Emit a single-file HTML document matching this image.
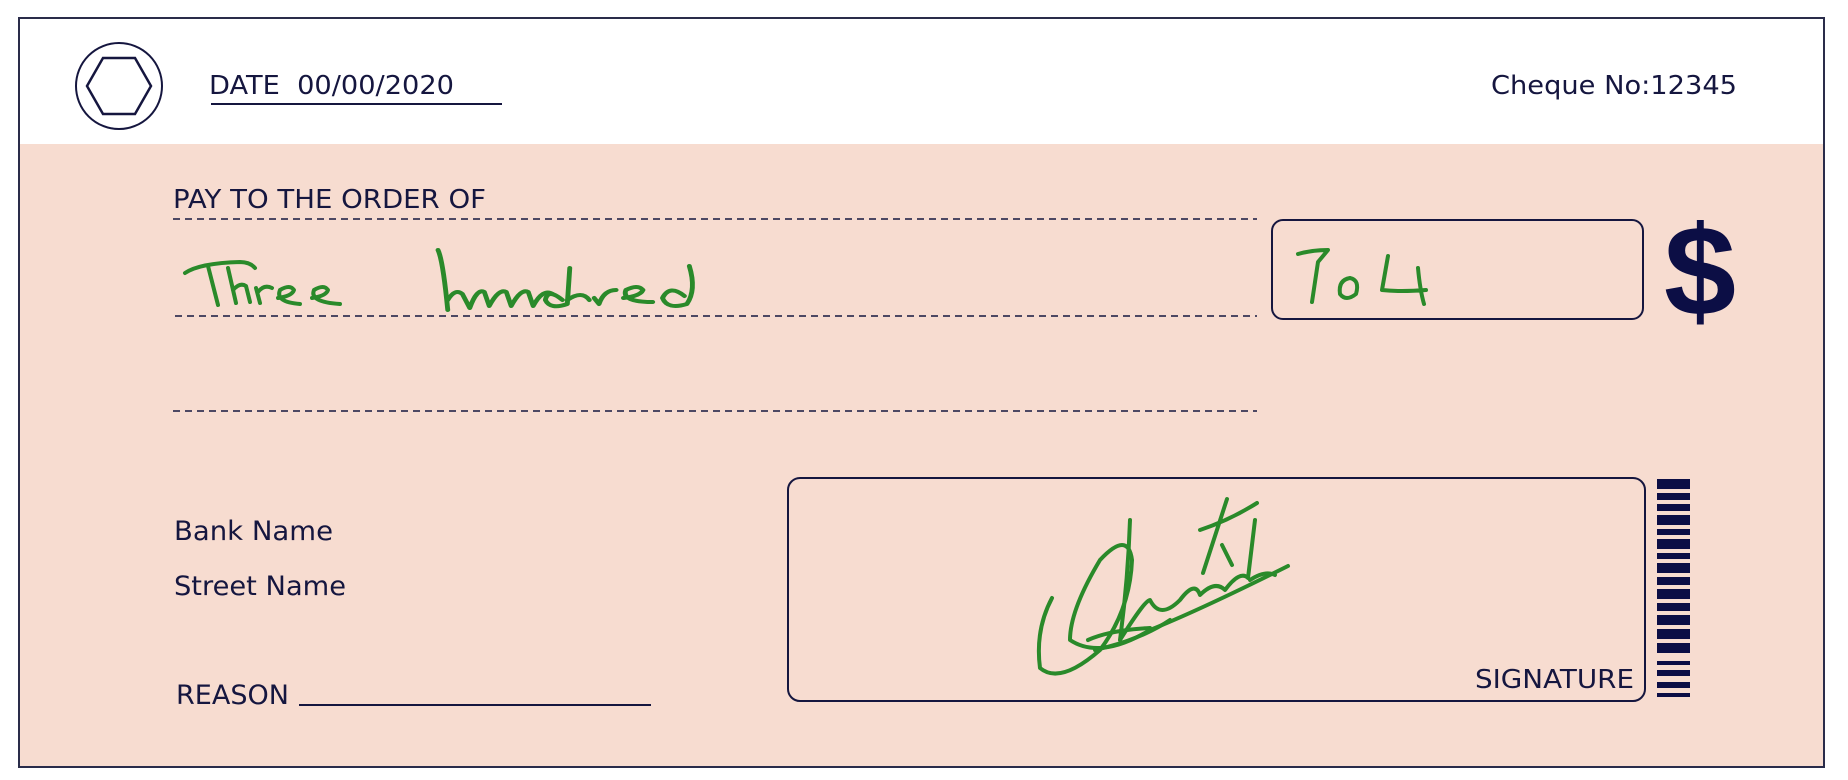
<!DOCTYPE html>
<html><head><meta charset="utf-8"><style>
html,body{margin:0;padding:0;background:#fff;width:1848px;height:780px;overflow:hidden}
svg{display:block}
text{font-family:"DejaVu Sans","Liberation Sans",sans-serif;fill:#15163f}
</style></head><body>
<svg width="1848" height="780" viewBox="0 0 1848 780" xmlns="http://www.w3.org/2000/svg">
<rect x="0" y="0" width="1848" height="780" fill="#fff"/>
<rect x="19" y="144" width="1805" height="623" fill="#f7dcd0"/>
<rect x="19" y="18" width="1805" height="749" fill="none" stroke="#2a2c4a" stroke-width="2"/>
<circle cx="119" cy="86" r="43" fill="none" stroke="#15163f" stroke-width="2"/>
<polygon points="87,86 103,58 135,58 151,86 135,114 103,114" fill="none" stroke="#15163f" stroke-width="2.5"/>
<text x="209" y="94" font-size="26" textLength="245" lengthAdjust="spacingAndGlyphs" xml:space="preserve">DATE  00/00/2020</text>
<line x1="211" y1="104" x2="502" y2="104" stroke="#15163f" stroke-width="2"/>
<text x="1491" y="94" font-size="26" textLength="246" lengthAdjust="spacingAndGlyphs">Cheque No:12345</text>
<text x="173" y="208" font-size="26" textLength="313" lengthAdjust="spacingAndGlyphs">PAY TO THE ORDER OF</text>
<g stroke="#15163f" stroke-width="1.5" stroke-dasharray="7,5">
<line x1="173" y1="219" x2="1257" y2="219"/>
<line x1="175" y1="316" x2="1257" y2="316"/>
<line x1="173" y1="411" x2="1257" y2="411"/>
</g>
<rect x="1272" y="220" width="371" height="99" rx="11" fill="none" stroke="#15163f" stroke-width="2"/>
<text x="1664" y="315" font-size="128" font-weight="bold" textLength="72" lengthAdjust="spacingAndGlyphs" style="fill:#0c0e45;font-family:'Liberation Sans',sans-serif">$</text>
<rect x="788" y="478" width="857" height="223" rx="12" fill="none" stroke="#15163f" stroke-width="2"/>
<g fill="#0c0e45">
<rect x="1657" y="479" width="33" height="10"/><rect x="1657" y="493" width="33" height="7"/><rect x="1657" y="504" width="33" height="7"/>
<rect x="1657" y="515" width="33" height="10"/><rect x="1657" y="529" width="33" height="6"/><rect x="1657" y="539" width="33" height="10"/>
<rect x="1657" y="553" width="33" height="6"/><rect x="1657" y="563" width="33" height="10"/><rect x="1657" y="577" width="33" height="8"/>
<rect x="1657" y="589" width="33" height="10"/><rect x="1657" y="603" width="33" height="8"/><rect x="1657" y="615" width="33" height="10"/>
<rect x="1657" y="629" width="33" height="10"/><rect x="1657" y="643" width="33" height="10"/><rect x="1657" y="661" width="33" height="4"/>
<rect x="1657" y="670" width="33" height="6"/><rect x="1657" y="682" width="33" height="6"/><rect x="1657" y="693" width="33" height="4"/>
</g>
<text x="1634" y="688" font-size="26" text-anchor="end" textLength="159" lengthAdjust="spacingAndGlyphs">SIGNATURE</text>
<text x="174" y="540" font-size="27" textLength="159" lengthAdjust="spacingAndGlyphs">Bank Name</text>
<text x="174" y="595" font-size="27" textLength="172" lengthAdjust="spacingAndGlyphs">Street Name</text>
<text x="176" y="704" font-size="27" textLength="113" lengthAdjust="spacingAndGlyphs">REASON</text>
<line x1="299" y1="705" x2="651" y2="705" stroke="#15163f" stroke-width="2"/>
<g fill="none" stroke="#2a8a2a" stroke-width="4" stroke-linecap="round" stroke-linejoin="round">
<!-- Three -->
<path d="M185 273 Q200 263 240 262 Q250 262 255 268"/>
<path d="M208 266 L218 305"/>
<path d="M228 268 L236 303 M233 290 Q240 282 246 286 L250 302"/>
<path d="M256 288 L260 303 M258 292 Q264 284 272 288"/>
<path d="M278 298 Q292 296 294 290 Q290 284 280 290 Q275 302 300 304"/>
<path d="M312 298 Q326 296 328 290 Q324 284 314 290 Q309 302 340 304"/>
<!-- hundred -->
<g transform="translate(438 0) scale(1.22 1) translate(-438 0)">
<path d="M438 250 Q442 260 446 310 M446 300 Q452 288 458 294 L464 308 Q470 288 476 292 L480 306 Q488 288 494 292 L498 306 Q506 288 512 292 L516 306 Q524 288 532 294"/>
<path d="M540 300 Q528 288 526 300 Q530 310 544 304 L546 268 M544 300 Q556 290 562 300 M566 298 L570 304 Q574 290 584 290"/>
<path d="M590 298 Q604 296 606 290 Q602 284 592 290 Q588 302 614 302"/>
<path d="M640 296 Q628 284 622 298 Q626 310 642 304 Q650 290 644 266"/>
</g>
<!-- 704 -->
<path d="M1298 254 Q1312 250 1328 250 L1318 262 L1312 302"/>
<path d="M1350 278 Q1338 280 1340 294 Q1346 302 1356 294 Q1360 280 1350 278"/>
<path d="M1388 256 L1382 290 Q1400 292 1426 290 M1418 268 Q1420 290 1424 304"/>
<!-- signature -->
<path d="M1052 598 Q1035 630 1040 668 Q1060 685 1100 650 Q1130 610 1132 560 Q1128 530 1100 560 Q1070 610 1070 640 Q1100 660 1150 630 Q1200 610 1288 566"/>
<path d="M1130 520 Q1128 580 1120 640 Q1145 600 1150 600 Q1160 620 1180 600 Q1195 580 1200 595 Q1215 580 1225 590 Q1240 570 1248 578 L1255 520 M1250 580 Q1265 570 1275 575"/>
<path d="M1088 640 Q1110 630 1150 628 M1095 650 Q1140 640 1170 620"/>
<path d="M1227 499 L1203 573 M1200 530 Q1230 520 1257 503 M1222 545 L1232 565"/>
</g>
</svg>
</body></html>
